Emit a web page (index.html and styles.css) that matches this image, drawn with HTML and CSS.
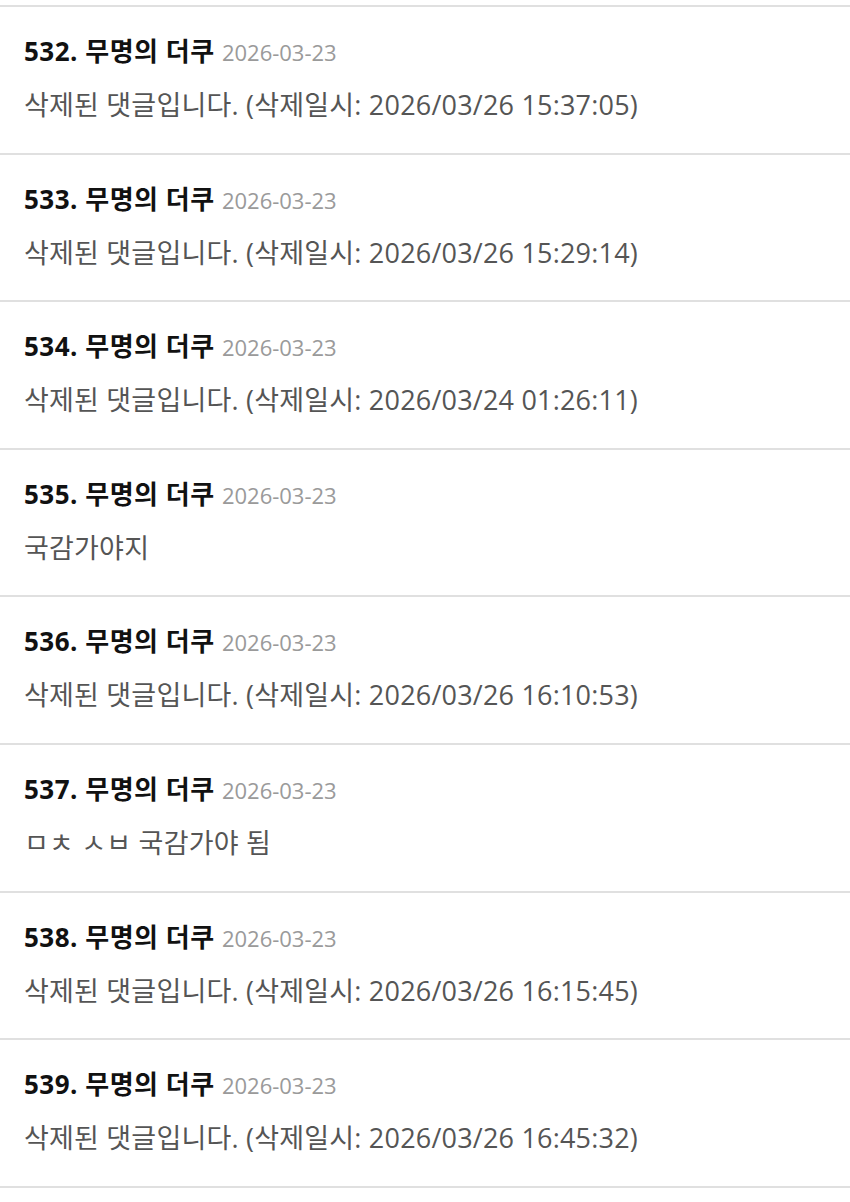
FILE: index.html
```html
<!DOCTYPE html>
<html lang="ko">
<head>
	<meta charset="UTF-8">
	<title>댓글</title>
	<link rel="stylesheet" href="styles.css">
</head>
<body>
	<div class="prev"></div>
	<ul class="comments">
		<li class="comment">
			<div class="comment-head"><b>532. 무명의 더쿠</b> <span class="date">2026-03-23</span></div>
			<p class="comment-body">삭제된 댓글입니다. (삭제일시: 2026/03/26 15:37:05)</p>
		</li>
		<li class="comment">
			<div class="comment-head"><b>533. 무명의 더쿠</b> <span class="date">2026-03-23</span></div>
			<p class="comment-body">삭제된 댓글입니다. (삭제일시: 2026/03/26 15:29:14)</p>
		</li>
		<li class="comment">
			<div class="comment-head"><b>534. 무명의 더쿠</b> <span class="date">2026-03-23</span></div>
			<p class="comment-body">삭제된 댓글입니다. (삭제일시: 2026/03/24 01:26:11)</p>
		</li>
		<li class="comment">
			<div class="comment-head"><b>535. 무명의 더쿠</b> <span class="date">2026-03-23</span></div>
			<p class="comment-body">국감가야지</p>
		</li>
		<li class="comment">
			<div class="comment-head"><b>536. 무명의 더쿠</b> <span class="date">2026-03-23</span></div>
			<p class="comment-body">삭제된 댓글입니다. (삭제일시: 2026/03/26 16:10:53)</p>
		</li>
		<li class="comment">
			<div class="comment-head"><b>537. 무명의 더쿠</b> <span class="date">2026-03-23</span></div>
			<p class="comment-body">ㅁㅊ ㅅㅂ 국감가야 됨</p>
		</li>
		<li class="comment">
			<div class="comment-head"><b>538. 무명의 더쿠</b> <span class="date">2026-03-23</span></div>
			<p class="comment-body">삭제된 댓글입니다. (삭제일시: 2026/03/26 16:15:45)</p>
		</li>
		<li class="comment">
			<div class="comment-head"><b>539. 무명의 더쿠</b> <span class="date">2026-03-23</span></div>
			<p class="comment-body">삭제된 댓글입니다. (삭제일시: 2026/03/26 16:45:32)</p>
		</li>
	</ul>
</body>
</html>
```

FILE: styles.css
```css
body {
	margin: 0;
	background: #fff;
	font-family: "Open Sans", "Noto Sans CJK KR", sans-serif;
	color: #111;
}

.prev {
	height: 5px;
	border-bottom: 2px solid #e0e0e0;
}

.comments {
	list-style: none;
	margin: 0;
	padding: 0;
}
.comment {
	box-sizing: border-box;
	height: 147.6px;
	padding: 29px 24px 0;
	border-bottom: 2px solid #e0e0e0;
}
.comment-head {
	font-size: 26px;
	line-height: 30px;
	letter-spacing: 0.5px;
}
.comment-head b {
	font-weight: 700;
	color: #111;
}
.date {
	font-size: 22px;
	color: #9a9a9a;
	letter-spacing: 0;
	margin-left: 0;
}
.comment-body {
	margin: 23px 0 0;
	font-size: 27px;
	line-height: 30px;
	color: #555;
	letter-spacing: 0.2px;
}
```
